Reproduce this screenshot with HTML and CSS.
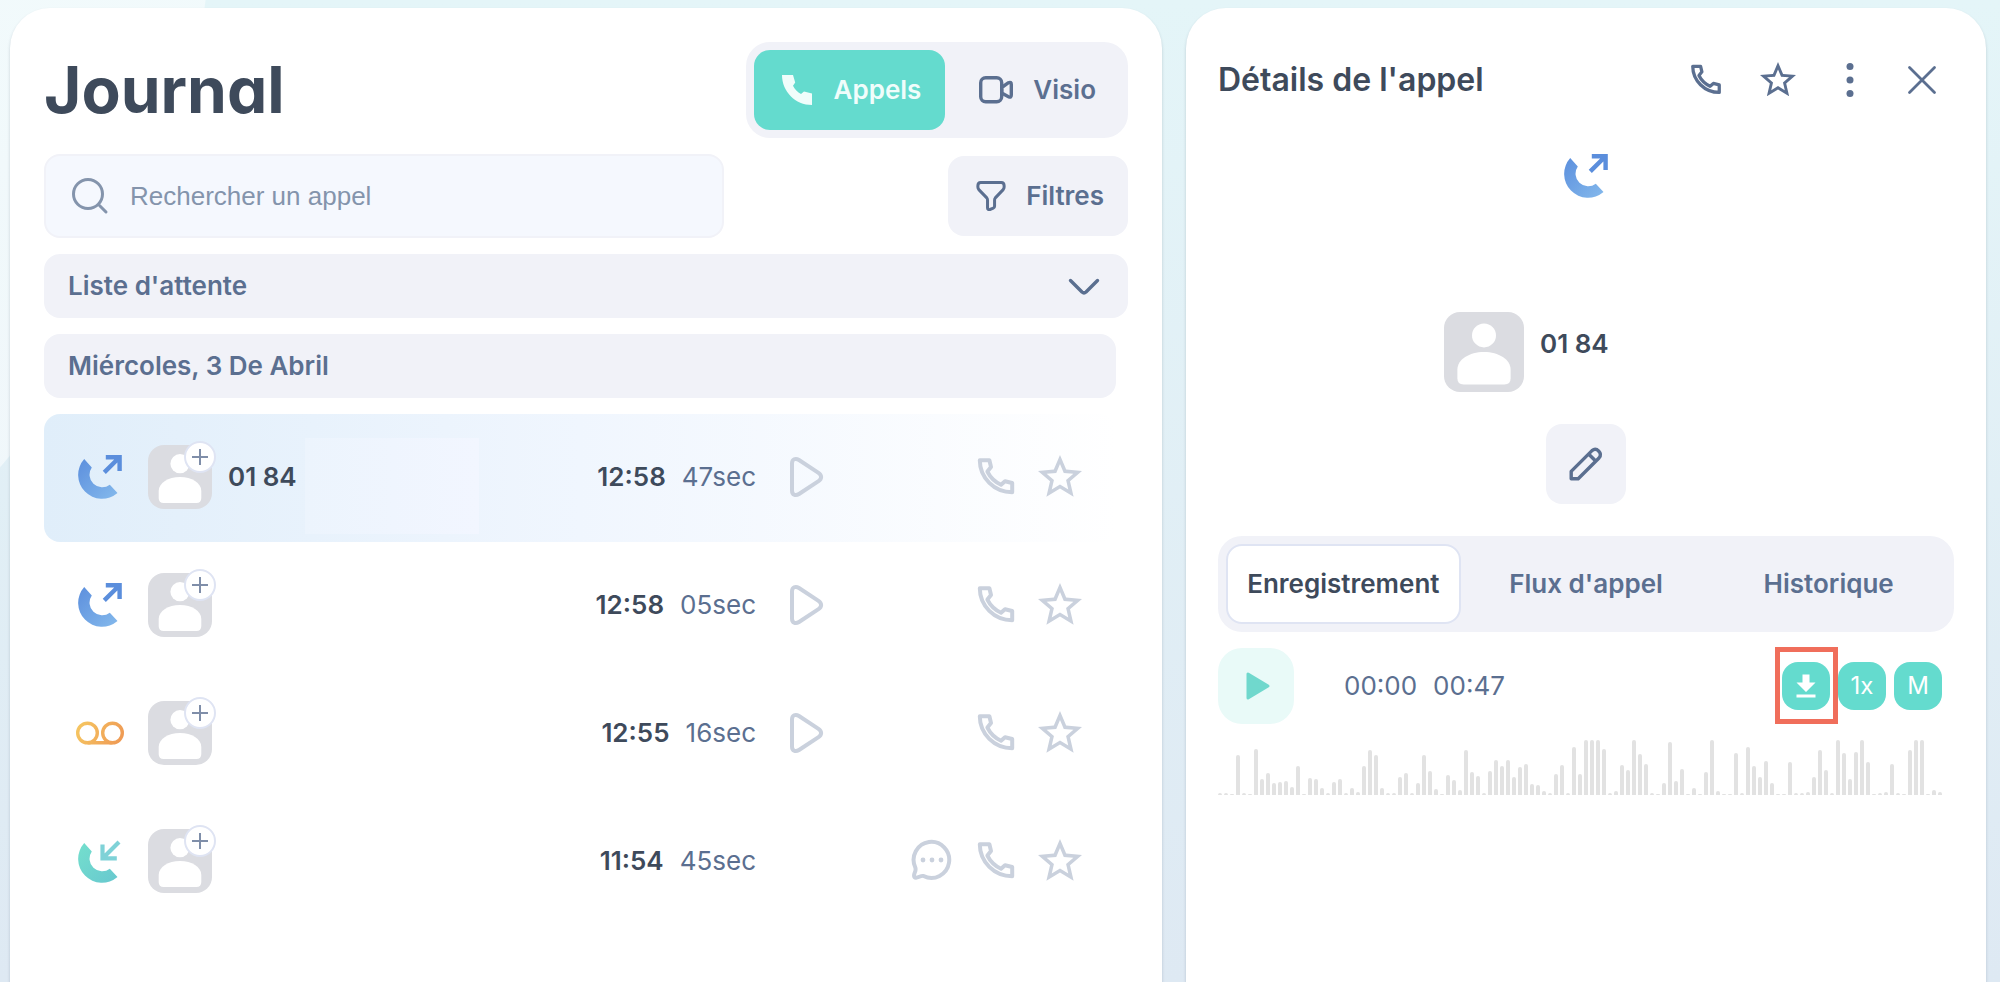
FILE: index.html
```html
<!DOCTYPE html>
<html lang="fr">
<head>
  <meta charset="UTF-8" />
  <meta name="viewport" content="width=device-width, initial-scale=1.0" />
  <title>Journal</title>
  <link rel="stylesheet" href="styles.css">
</head>
<body>
  <!-- Icônes partagées -->
  <svg class="sprite" aria-hidden="true">
    <defs>
      <linearGradient id="blueGrad" x1="0" y1="0" x2="1" y2="1">
        <stop offset="0" stop-color="#5c8fdd" />
        <stop offset="1" stop-color="#84b9ec" />
      </linearGradient>
      <linearGradient id="greenGrad" x1="0" y1="0" x2="1" y2="1">
        <stop offset="0" stop-color="#74dfcd" />
        <stop offset="1" stop-color="#68c8cf" />
      </linearGradient>
      <linearGradient id="orangeGrad" gradientUnits="userSpaceOnUse" x1="0" y1="10" x2="48" y2="34">
        <stop offset="0" stop-color="#f6c962" />
        <stop offset="1" stop-color="#ee9653" />
      </linearGradient>
    </defs>
    <symbol id="i-out" viewBox="-2 0 48 44">
      <path fill="url(#blueGrad)" d="M6.2 4A23.85 23.85 0 0 0 39.5 38L31.8 29.7A12.6 12.6 0 0 1 13.8 12.5Z" />
      <path fill="none" stroke="#5b8edc" stroke-width="4.4" d="M27.8 2.2H41.6V16M41.3 2.5 26.3 17.4" />
    </symbol>
    <symbol id="i-in" viewBox="-2 0 48 44">
      <path fill="url(#greenGrad)" d="M6.2 4A23.85 23.85 0 0 0 39.5 38L31.8 29.7A12.6 12.6 0 0 1 13.8 12.5Z" />
      <path fill="none" stroke="#7fd2d7" stroke-width="4.2" d="M24.5 5.5V19.4H38.8M25 19 41 3" />
    </symbol>
    <symbol id="i-voicemail" viewBox="0 0 48 44">
      <g fill="none" stroke="url(#orangeGrad)" stroke-width="3.4">
        <circle cx="11.5" cy="22" r="9.8" />
        <circle cx="36.5" cy="22" r="9.8" />
        <path d="M11.5 31.8H36.5L36.5 31.9" />
      </g>
    </symbol>
    <symbol id="i-avatar" viewBox="0 0 64 64">
      <circle cx="32" cy="18.7" r="9.6" />
      <path d="M10.7 46c0-8 9.5-14 21.3-14s21.3 6 21.3 14v7q0 5-5 5H15.7q-5 0-5-5z" />
    </symbol>
    <symbol id="i-phone" viewBox="0 0 44 44">
      <path fill="none" stroke="currentColor" stroke-width="4" stroke-linejoin="round" d="M5.8 5.3H15.4L17 12 13.4 16.6C15.8 21.5 20.7 26.8 27 29.7L31 26.2 38.2 28V37.2C20.3 37.2 5.8 22.8 5.8 5.3Z" />
    </symbol>
    <symbol id="i-phone-full" viewBox="0 0 30 30">
      <path fill="currentColor" d="M0 0H11L13.2 7.6 11 10.8C12.6 14.3 15.6 17.2 19 19L22 16.6 30 18.6V30C13.4 30 0 16.6 0 0Z" />
    </symbol>
    <symbol id="i-star" viewBox="2 2 20 20">
      <path fill="currentColor" d="M22 9.24l-7.19-.62L12 2 9.19 8.63 2 9.24l5.46 4.73L5.82 21 12 17.27 18.18 21l-1.63-7.03L22 9.24zM12 15.4l-3.76 2.27 1-4.28-3.32-2.88 4.38-.38L12 6.1l1.71 4.04 4.38.38-3.32 2.88 1 4.28L12 15.4z" />
    </symbol>
    <symbol id="i-play" viewBox="0 0 44 44">
      <path fill="none" stroke="currentColor" stroke-width="4" stroke-linejoin="round" d="M8 8.5C8 4 11.5 2.8 15 5L34.5 17.8C38 20.3 38 23.7 34.5 26.2L15 39C11.5 41.2 8 40 8 35.5Z" />
    </symbol>
    <symbol id="i-chat" viewBox="0 0 44 44">
      <path fill="none" stroke="currentColor" stroke-width="4" stroke-linejoin="round" d="M5.3 28.5A17.8 18 0 1 1 13.5 37C11 36.2 8.5 38.8 6 38.7 3.5 38.5 3.8 36 4.8 33.5 5.7 31.5 6 30.5 5.3 28.5Z" />
      <g fill="currentColor"><circle cx="13" cy="21" r="2.4" /><circle cx="22" cy="21" r="2.4" /><circle cx="31" cy="21" r="2.4" /></g>
    </symbol>
  </svg>

  <!-- Journal des appels -->
  <main class="panel journal">
    <header class="journal-header">
      <h1>Journal</h1>
      <div class="switch">
        <button class="switch-btn active" type="button">
          <svg class="icon-30"><use href="#i-phone-full" /></svg>
          Appels
        </button>
        <button class="switch-btn" type="button">
          <svg class="icon-34" viewBox="0 0 34 34" fill="none" stroke="currentColor" stroke-width="3.4" stroke-linejoin="round">
            <rect x="1.7" y="4.7" width="21" height="24" rx="5" />
            <path d="M22.7 14.5 29.5 9.7Q32.3 8.5 32.3 11.5V22Q32.3 25 29.5 23.7L22.7 20Z" />
          </svg>
          Visio
        </button>
      </div>
    </header>

    <div class="search-row">
      <div class="search">
        <svg class="icon-36" viewBox="0 0 36 36" fill="none" stroke="currentColor" stroke-width="3" stroke-linecap="round">
          <circle cx="16" cy="16" r="14.5" />
          <path d="M27.5 27.5 34 34" />
        </svg>
        <input type="text" placeholder="Rechercher un appel" aria-label="Rechercher un appel" />
      </div>
      <button class="filter-btn" type="button">
        <svg class="icon-30" viewBox="1 0 30 32" fill="none" stroke="currentColor" stroke-width="3.2" stroke-linejoin="round">
          <path d="M5 1.5H27Q30 1.5 30 5V6.500Q30 8 29 9.2L20.6 18Q19.8 19 19.8 20.5V27Q19.8 28.5 18.5 29L14.8 30.4Q12.3 31 12.3 28.5V20.5Q12.3 19 11.5 18L3 9.2Q2 8 2 6.5V5Q2 1.500 5 1.5Z" />
        </svg>
        Filtres
      </button>
    </div>

    <button class="section waiting" type="button">
      Liste d'attente
      <svg class="icon-32" viewBox="0 0 32 32" fill="none" stroke="currentColor" stroke-width="3.4" stroke-linecap="round" stroke-linejoin="round">
        <path d="M2.5 10.5 14 22Q16 23.8 18 22L29.5 10.5" />
      </svg>
    </button>

    <section class="day">
      <h2 class="section">Miércoles, 3 De Abril</h2>
      <ul class="calls">
        <li class="call selected">
          <svg class="status"><use href="#i-out" /></svg>
          <div class="contact">
            <div class="avatar">
              <svg><use href="#i-avatar" /></svg>
              <button class="add" type="button" aria-label="Ajouter le contact"></button>
            </div>
            <span class="number">01 84</span>
            <span class="hidden-number"></span>
          </div>
          <div class="times"><b>12:58</b><span>47sec</span></div>
          <button class="icon-btn" type="button" aria-label="Écouter"><svg><use href="#i-play" /></svg></button>
          <div class="actions">
            <button class="icon-btn" type="button" aria-label="Appeler"><svg><use href="#i-phone" /></svg></button>
            <button class="icon-btn" type="button" aria-label="Favori"><svg><use href="#i-star" /></svg></button>
          </div>
        </li>
        <li class="call">
          <svg class="status"><use href="#i-out" /></svg>
          <div class="contact">
            <div class="avatar">
              <svg><use href="#i-avatar" /></svg>
              <button class="add" type="button" aria-label="Ajouter le contact"></button>
            </div>
          </div>
          <div class="times"><b>12:58</b><span>05sec</span></div>
          <button class="icon-btn" type="button" aria-label="Écouter"><svg><use href="#i-play" /></svg></button>
          <div class="actions">
            <button class="icon-btn" type="button" aria-label="Appeler"><svg><use href="#i-phone" /></svg></button>
            <button class="icon-btn" type="button" aria-label="Favori"><svg><use href="#i-star" /></svg></button>
          </div>
        </li>
        <li class="call">
          <svg class="status"><use href="#i-voicemail" /></svg>
          <div class="contact">
            <div class="avatar">
              <svg><use href="#i-avatar" /></svg>
              <button class="add" type="button" aria-label="Ajouter le contact"></button>
            </div>
          </div>
          <div class="times"><b>12:55</b><span>16sec</span></div>
          <button class="icon-btn" type="button" aria-label="Écouter"><svg><use href="#i-play" /></svg></button>
          <div class="actions">
            <button class="icon-btn" type="button" aria-label="Appeler"><svg><use href="#i-phone" /></svg></button>
            <button class="icon-btn" type="button" aria-label="Favori"><svg><use href="#i-star" /></svg></button>
          </div>
        </li>
        <li class="call">
          <svg class="status"><use href="#i-in" /></svg>
          <div class="contact">
            <div class="avatar">
              <svg><use href="#i-avatar" /></svg>
              <button class="add" type="button" aria-label="Ajouter le contact"></button>
            </div>
          </div>
          <div class="times"><b>11:54</b><span>45sec</span></div>
          <span></span>
          <div class="actions">
            <button class="icon-btn" type="button" aria-label="Message"><svg><use href="#i-chat" /></svg></button>
            <button class="icon-btn" type="button" aria-label="Appeler"><svg><use href="#i-phone" /></svg></button>
            <button class="icon-btn" type="button" aria-label="Favori"><svg><use href="#i-star" /></svg></button>
          </div>
        </li>
      </ul>
    </section>
  </main>

  <!-- Détails de l'appel -->
  <aside class="panel details">
    <header class="details-header">
      <h2>Détails de l'appel</h2>
      <div class="details-actions">
        <button class="icon-btn" type="button" aria-label="Appeler"><svg><use href="#i-phone" /></svg></button>
        <button class="icon-btn" type="button" aria-label="Favori"><svg><use href="#i-star" /></svg></button>
        <button class="icon-btn" type="button" aria-label="Plus">
          <svg viewBox="0 0 36 36" fill="currentColor"><circle cx="18" cy="4.5" r="3.5" /><circle cx="18" cy="18" r="3.5" /><circle cx="18" cy="31.5" r="3.5" /></svg>
        </button>
        <button class="icon-btn" type="button" aria-label="Fermer">
          <svg viewBox="0 0 36 36" fill="none" stroke="currentColor" stroke-width="2.8" stroke-linecap="round"><path d="M5.5 5.5 30.5 30.5M30.5 5.5 5.5 30.5" /></svg>
        </button>
      </div>
    </header>

    <div class="summary">
      <svg class="status"><use href="#i-out" /></svg>
    </div>

    <div class="person">
      <div class="avatar large"><svg><use href="#i-avatar" /></svg></div>
      <span class="number">01 84</span>
    </div>

    <button class="edit-btn" type="button" aria-label="Modifier">
      <svg class="icon-36" viewBox="0 0 36 36" fill="none" stroke="currentColor" stroke-width="3.4" stroke-linejoin="round">
        <path d="M3.2 25.4 24 4.6Q27.5 1.8 30.8 5.2 34 8.5 31 12L10.2 32.8H3.2ZM20.6 8 27.6 15" />
      </svg>
    </button>

    <nav class="tabs">
      <button class="tab active" type="button">Enregistrement</button>
      <button class="tab" type="button">Flux d'appel</button>
      <button class="tab" type="button">Historique</button>
    </nav>

    <div class="player">
      <button class="play-btn" type="button" aria-label="Lecture">
        <svg class="icon-30" viewBox="0 0 30 30" fill="currentColor" stroke="currentColor" stroke-width="3" stroke-linejoin="round"><path d="M7 3V27L27 15Z" /></svg>
      </button>
      <div class="clock"><span>00:00</span><span>00:47</span></div>
      <div class="tools">
        <button class="tool download" type="button" aria-label="Télécharger">
          <svg viewBox="0 0 24 24" fill="currentColor"><path d="M8.5 0.5H15.5V8.5H21.5L12 18 2.5 8.5H8.5ZM2.5 20.5H21.5V23.5H2.5Z" /></svg>
        </button>
        <button class="tool" type="button">1x</button>
        <button class="tool" type="button">M</button>
      </div>
    </div>

    <div class="waveform" id="waveform"></div>
  </aside>

  <script>
    const levels = [
      2, 2, 1, 40, 2, 1, 46, 16, 22, 12, 13, 14, 8, 29, 1, 17, 16, 7, 2, 13,
      16, 2, 7, 3, 29, 45, 40, 7, 2, 2, 18, 22, 2, 12, 40, 24, 6, 1, 20, 15,
      5, 45, 23, 19, 2, 24, 35, 29, 35, 18, 28, 31, 11, 10, 4, 2, 21, 30, 2, 48,
      21, 55, 55, 55, 46, 2, 4, 30, 25, 55, 41, 31, 2, 1, 12, 53, 14, 26, 1, 7,
      1, 23, 55, 4, 1, 1, 42, 2, 48, 29, 18, 34, 12, 1, 1, 33, 2, 2, 3, 18,
      45, 25, 2, 55, 42, 16, 43, 55, 33, 1, 2, 3, 31, 2, 1, 45, 55, 55, 1, 5, 3
    ];
    const waveform = document.getElementById('waveform');

    levels.forEach(function(level) {
      const bar = document.createElement('span');
      bar.className = 'bar';
      bar.style.height = level + 'px';
      waveform.appendChild(bar);
    });
  </script>
</body>
</html>
```
FILE: styles.css
```css
* {
  box-sizing: border-box;
}
body {
  margin: 0;
  padding: 8px 14px 0 10px;
  min-height: 100vh;
  display: grid;
  grid-template-columns: minmax(0, 36fr) minmax(0, 25fr);
  gap: 24px;
  font-family: Inter, "Liberation Sans", sans-serif;
  font-size: 26px;
  line-height: 32px;
  color: #3e4a5b;
  background: radial-gradient(circle at -681px -111px, rgba(255, 255, 255, 0.5) 893px, transparent 894px),
    linear-gradient(#e4f5f8, #dee9f3);
}
h1, h2, ul {
  margin: 0;
  padding: 0;
}
button {
  font: inherit;
  color: inherit;
  border: none;
  background: none;
  padding: 0;
  cursor: pointer;
}
svg {
  display: block;
  flex-shrink: 0;
  overflow: visible;
}
.sprite {
  position: absolute;
  width: 0;
  height: 0;
}
.icon-30 { width: 30px; height: 30px; }
.icon-32 { width: 32px; height: 32px; }
.icon-34 { width: 34px; height: 34px; }
.icon-36 { width: 36px; height: 36px; }
.panel {
  background: #fff;
  border-radius: 40px 40px 0 0;
  box-shadow: 0 2px 3px rgba(60, 80, 100, 0.25);
}

/* Journal */
.journal {
  padding: 34px 34px 0;
}
.journal-header {
  display: flex;
  align-items: center;
  justify-content: space-between;
}
.journal-header h1 {
  font-size: 64px;
  line-height: 72px;
  font-weight: 700;
  font-feature-settings: "cv11";
}
.switch {
  display: flex;
  padding: 8px;
  background: #f1f2f8;
  border-radius: 24px;
}
.switch-btn {
  display: flex;
  align-items: center;
  gap: 20px;
  height: 80px;
  padding: 0 24px 0 34px;
  border-radius: 16px;
  font-weight: 600;
  color: #5b6f90;
}
.switch-btn.active {
  gap: 22px;
  padding-left: 28px;
  background: #64dbce;
  color: #f0fdfb;
}
.search-row {
  display: flex;
  align-items: center;
  justify-content: space-between;
  margin-top: 16px;
}
.search {
  display: flex;
  align-items: center;
  gap: 22px;
  width: 680px;
  height: 84px;
  padding: 0 26px;
  background: #f5f8fe;
  border: 2px solid #f1f2f8;
  border-radius: 16px;
  color: #8494ac;
}
.search input {
  flex: 1;
  min-width: 0;
  border: none;
  outline: none;
  padding: 0;
  background: none;
  font: 26px "Liberation Sans", Arial, sans-serif;
  color: #3e4a5b;
}
.search input::placeholder {
  color: #8494ac;
}
.filter-btn {
  display: flex;
  align-items: center;
  gap: 20px;
  height: 80px;
  padding: 0 24px 0 28px;
  background: #f1f2f8;
  border-radius: 16px;
  font-weight: 600;
  color: #5b6f90;
}
.section {
  display: flex;
  align-items: center;
  justify-content: space-between;
  width: 100%;
  height: 64px;
  margin-top: 16px;
  padding: 0 28px 0 24px;
  background: #f1f2f8;
  border-radius: 16px;
  font-size: 26px;
  font-weight: 600;
  color: #5b6f90;
}
.day {
  padding-right: 12px;
}
.calls {
  list-style: none;
  margin-top: 16px;
}
.call {
  display: grid;
  grid-template-columns: 48px 1fr auto 52px 226px;
  align-items: center;
  gap: 24px;
  height: 128px;
  padding: 0 34px 2px 32px;
  border-radius: 16px;
}
.call.selected {
  background: linear-gradient(90deg, #e0eefa, #f0f6fe 50%, #fff);
}
.status {
  width: 48px;
  height: 44px;
}
.contact {
  display: flex;
  align-items: center;
  min-width: 0;
}
.avatar {
  position: relative;
  flex-shrink: 0;
  width: 64px;
  height: 64px;
  margin-right: 16px;
  border-radius: 16px;
  background: #dbdce1;
  fill: #fff;
}
.avatar svg {
  width: 100%;
  height: 100%;
}
.avatar .add {
  position: absolute;
  top: -4px;
  right: -4px;
  width: 32px;
  height: 32px;
  border: 2px solid #dfe4f3;
  border-radius: 50%;
  background:
    linear-gradient(#7f8ea9, #7f8ea9) center / 16px 2px no-repeat,
    linear-gradient(#7f8ea9, #7f8ea9) center / 2px 16px no-repeat,
    #fff;
}
.number {
  font-weight: 600;
  white-space: nowrap;
}
.hidden-number {
  align-self: flex-end;
  width: 174px;
  height: 96px;
  margin: 18px 0 0 8px;
  background: linear-gradient(90deg, #ecf4fd, #f2f6ff);
}
.times {
  display: flex;
  justify-content: flex-end;
  gap: 16px;
}
.times b {
  font-weight: 600;
}
.times span {
  color: #5b6f90;
}
.icon-btn {
  display: flex;
  justify-content: center;
  align-items: center;
}
.icon-btn svg {
  width: 44px;
  height: 44px;
}
.call .icon-btn {
  color: #cad1dd;
}
.actions {
  display: flex;
  justify-content: flex-end;
  gap: 20px;
}

/* Détails */
.details {
  display: flex;
  flex-direction: column;
  padding: 32px 32px 0;
}
.details-header {
  display: flex;
  align-items: center;
  justify-content: space-between;
  height: 80px;
}
.details-header h2 {
  font-size: 32px;
  line-height: 40px;
  font-weight: 600;
}
.details-actions {
  display: flex;
  gap: 36px;
  padding-right: 14px;
  color: #5b6f90;
}
.details-actions .icon-btn svg {
  width: 36px;
  height: 36px;
}
.summary {
  display: flex;
  justify-content: center;
  min-height: 192px;
  padding-top: 34px;
}
.person {
  display: flex;
  align-self: center;
  width: 284px;
}
.person .number {
  padding-top: 16px;
}
.avatar.large {
  width: 80px;
  height: 80px;
}
.edit-btn {
  align-self: center;
  display: flex;
  align-items: center;
  justify-content: center;
  width: 80px;
  height: 80px;
  margin: 32px 0;
  background: #f1f2f8;
  border-radius: 16px;
  color: #5b6f90;
}
.tabs {
  display: flex;
  gap: 8px;
  padding: 8px;
  background: #f1f2f8;
  border-radius: 24px;
}
.tab {
  flex: 1 1 0;
  height: 80px;
  border: 2px solid transparent;
  border-radius: 16px;
  font-weight: 600;
  color: #5b6f90;
}
.tab.active {
  background: #fff;
  border-color: #dfe4f3;
  color: #3e4a5b;
}
.player {
  display: flex;
  align-items: center;
  margin-top: 16px;
}
.play-btn {
  display: flex;
  align-items: center;
  justify-content: center;
  width: 76px;
  height: 76px;
  background: #e9faf8;
  border-radius: 24px;
  color: #70d8cd;
}
.clock {
  display: flex;
  gap: 16px;
  margin-left: 50px;
  color: #5b6f90;
}
.tools {
  display: flex;
  gap: 8px;
  margin-left: auto;
  padding-right: 12px;
}
.tool {
  position: relative;
  display: flex;
  align-items: center;
  justify-content: center;
  width: 48px;
  height: 48px;
  background: #64dbce;
  border-radius: 16px;
  font-size: 24px;
  color: #fff;
}
.tool svg {
  width: 24px;
  height: 24px;
}
.download::after {
  content: "";
  position: absolute;
  inset: -15px -8px -14px -7px;
  z-index: 1;
  border: 5px solid #f06e5b;
}
.waveform {
  display: flex;
  align-items: flex-end;
  gap: 2px;
  height: 55px;
  margin: 16px 12px 0 0;
}
.bar {
  flex: 1 1 0;
  background: #e2e2e2;
  border-radius: 2px 2px 0 0;
}
```
